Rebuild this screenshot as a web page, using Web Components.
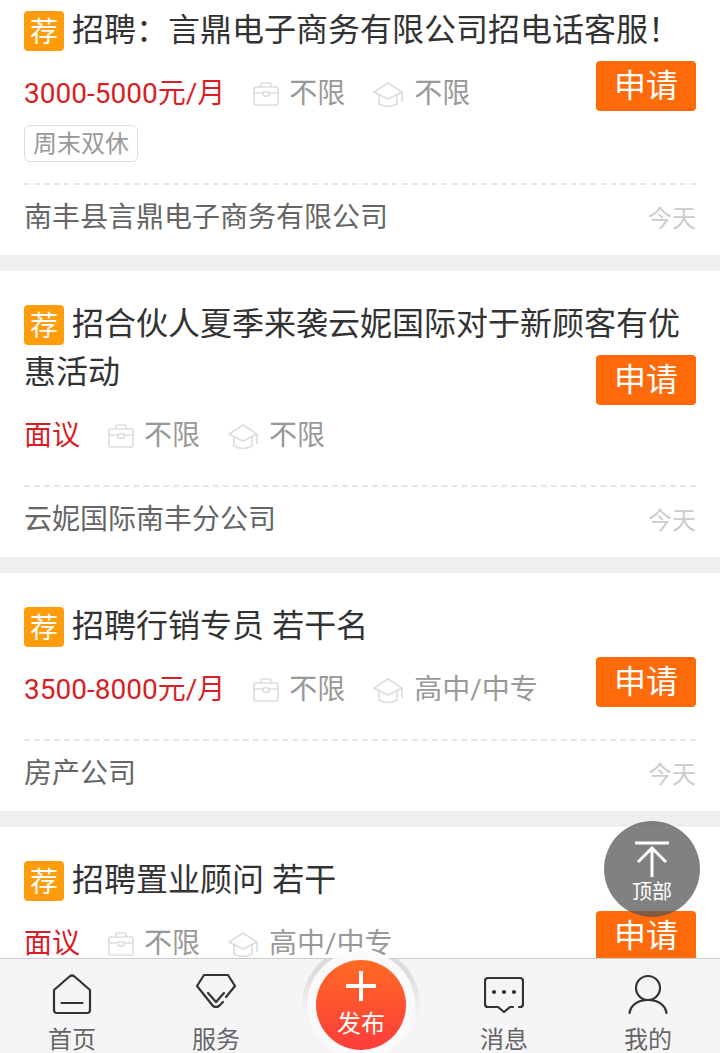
<!DOCTYPE html>
<html lang="zh">
<head>
<meta charset="utf-8">
<title>招聘</title>
<style>
    html, body { margin: 0; padding: 0; height: 100%; background: #efefef; overflow: hidden; }
    body { font-family: Roboto, "Noto Sans CJK SC", sans-serif; }
</style>
</head>
<body>

<app-page>
    <job-card rec title="招聘：言鼎电子商务有限公司招电话客服！" salary="3000-5000元/月" exp="不限" edu="不限" tag="周末双休" company="南丰县言鼎电子商务有限公司"></job-card>
    <job-card rec title="招合伙人夏季来袭云妮国际对于新顾客有优惠活动" salary="面议" exp="不限" edu="不限" company="云妮国际南丰分公司"></job-card>
    <job-card rec title="招聘行销专员 若干名" salary="3500-8000元/月" exp="不限" edu="高中/中专" company="房产公司"></job-card>
    <job-card rec title="招聘置业顾问 若干" salary="面议" exp="不限" edu="高中/中专"></job-card>
    <top-button slot="float"></top-button>
    <tab-bar slot="bar"></tab-bar>
</app-page>

<script>
class AppPage extends HTMLElement {
    constructor() {
        super()
        this.attachShadow({ mode: 'open' })
        this.shadowRoot.innerHTML = `
            <style>
                :host { display: block; position: relative; width: 720px; height: 1053px; overflow: hidden; }
                /* list is scrolled, first card is cut off at the top */
                .list { display: flex; flex-direction: column; gap: 16px; margin-top: -23px; }
                ::slotted(job-card) { flex: none; }
                ::slotted(top-button) { position: absolute; left: 604px; top: 821px; }
                ::slotted(tab-bar) { position: absolute; left: 0; right: 0; bottom: 0; }
            </style>
            <div class="list"><slot></slot></div>
            <slot name="float"></slot>
            <slot name="bar"></slot>
        `
    }
}

class JobCard extends HTMLElement {
    constructor() {
        super()
        this.attachShadow({ mode: 'open' })
    }

    connectedCallback() {
        this.render()
    }

    render() {
        const attr = name => this.getAttribute(name) ?? ''
        const tag = attr('tag')
        const company = attr('company')
        this.shadowRoot.innerHTML = `
            <style>
                :host { display: block; background: #fff; padding: 28px 24px 0; }
                .body { display: grid; }
                .body > * { grid-area: 1 / 1; }
                .title { margin-top: -2px; font-family: "Noto Sans CJK SC", Roboto, sans-serif; font-size: 32px; line-height: 48px;
                    word-spacing: 1px; color: #333; }
                .badge { display: inline-block; width: 40px; height: 40px; margin-right: 8px; border-radius: 4px;
                    background: #ff9c0c; color: #fff; font-size: 28px; line-height: 38px; text-align: center; vertical-align: -1px; }
                .apply { justify-self: end; align-self: start; margin-top: 56px; width: 100px; height: 50px;
                    border-radius: 4px; background: #ff6a0a; color: #fff; font-size: 32px; line-height: 50px; text-align: center; }
                .meta { display: flex; align-items: center; height: 48px; margin: 16px 0 1px; font-size: 28px; color: #999; }
                .salary { color: #d81e26; margin-right: 28px; }
                .meta svg { display: block; margin: 6px 10px 0 0; }
                .meta .cap { margin: 8px 11px 0 0; }
                .exp { margin-right: 28px; }
                .tag { display: block; width: max-content; margin-top: 10px; padding: 0 8px; height: 35px; border: 1px solid #ddd;
                    border-radius: 6px; font-size: 24px; line-height: 37px; color: #999; }
                .foot { display: flex; justify-content: space-between; align-items: center; height: 60px; padding-bottom: 10px; margin-top: 27px;
                    border-top: 2px dashed #e6e6e6; }
                .foot.tagged { margin-top: 21px; }
                .company { font-size: 28px; color: #666; }
                .date { margin-top: 2px; font-size: 24px; color: #ccc; }
            </style>
            <div class="body">
                <div>
                    <div class="title">${this.hasAttribute('rec') ? '<span class="badge">荐</span>' : ''}${attr('title')}</div>
                    <div class="meta">
                        <span class="salary">${attr('salary')}</span>
                        <svg width="26" height="24" viewBox="0 0 26 24" fill="none" stroke="#ddd" stroke-width="1.6">
                            <rect x="1" y="5" width="24" height="18" rx="2"/>
                            <path d="M8 5V2.500Q8 1 9.500 1h7Q18 1 18 2.500V5M1 11h9M16 11h9M10 10h6v3.500q-3 1.500-6 0z"/>
                        </svg>
                        <span class="exp">${attr('exp')}</span>
                        <svg class="cap" width="30" height="26" viewBox="0 0 30 26" fill="none" stroke="#ddd" stroke-width="1.6">
                            <path d="M15 1 29 10 15 17 1 10zM6 13v9q9 5 18 0v-9M29 10v10"/>
                        </svg>
                        <span>${attr('edu')}</span>
                    </div>
                    ${tag ? `<span class="tag">${tag}</span>` : ''}
                </div>
                <div class="apply">申请</div>
            </div>
            ${company ? `<div class="foot ${tag ? 'tagged' : ''}">
                <span class="company">${company}</span>
                <span class="date">今天</span>
            </div>` : ''}
        `
    }
}

class TopButton extends HTMLElement {
    constructor() {
        super()
        this.attachShadow({ mode: 'open' })
        this.shadowRoot.innerHTML = `
            <style>
                :host { display: flex; flex-direction: column; align-items: center; width: 96px; height: 96px; border-radius: 50%;
                    background: rgba(85, 85, 85, .74); color: #fff; font-size: 20px; line-height: 24px; padding-top: 20px; box-sizing: border-box; }
                svg { display: block; margin-bottom: 3px; }
            </style>
            <svg width="36" height="36" viewBox="0 0 36 36" fill="none" stroke="#fff" stroke-width="3">
                <path d="M1 2h34M18 36V7M4 21 18 7l14 14"/>
            </svg>
            <span>顶部</span>
        `
    }
}

class TabBar extends HTMLElement {
    constructor() {
        super()
        this.attachShadow({ mode: 'open' })
        this.shadowRoot.innerHTML = `
            <style>
                :host { display: grid; grid-template-columns: repeat(5, 144px); height: 94px;
                    background: #f5f5f7; border-top: 1px solid #ccc; color: #666; font-size: 24px; }
                .item { display: flex; flex-direction: column; align-items: center; padding-top: 14px; }
                .item svg { display: block; height: 44px; margin-bottom: 10px; }
                .item span { line-height: 26px; }
                .pub { position: relative; }
                /* grey crescents only show inside the bar */
                .clip { position: absolute; left: 0; right: 0; top: 0; height: 94px; overflow: hidden; }
                .halo { position: absolute; left: 14px; top: -13px; width: 118px; height: 118px; border-radius: 50%;
                    background: linear-gradient(180deg, #dcdcde 20%, #f5f5f7 60%); }
                .ring { position: absolute; left: 19px; top: -8px; width: 108px; height: 108px; border-radius: 50%; background: #fafafb; }
                .circle { position: absolute; left: 28px; top: 1px; width: 90px; height: 90px; border-radius: 50%;
                    background: linear-gradient(180deg, #ff6a24, #fb3c3c); color: #fff; display: flex; flex-direction: column; align-items: center; }
                .circle svg { display: block; margin-top: 11px; }
                .circle span { line-height: 28px; margin-top: 9px; }
            </style>
            <div class="item">
                <svg width="40" height="44" viewBox="0 0 40 44" fill="none" stroke="#333" stroke-width="2.200" stroke-linejoin="round" stroke-linecap="round">
                    <path d="M2 17 17.500 3.500q2.500-2 5 0L38 17V37q0 3-3 3H5q-3 0-3-3zM9.500 30h21"/>
                </svg>
                <span>首页</span>
            </div>
            <div class="item">
                <svg width="40" height="44" viewBox="0 0 40 44" fill="none" stroke="#333" stroke-width="2.200" stroke-linejoin="round" stroke-linecap="round">
                    <path d="M30 24 39 13 32 2H8L1 13 17 33q3 2 6 0l4-4M12 20l8 9 8-9"/>
                </svg>
                <span>服务</span>
            </div>
            <div class="pub">
                <div class="clip"><div class="halo"></div></div>
                <div class="ring"></div>
                <div class="circle">
                    <svg width="30" height="30" viewBox="0 0 30 30" stroke="#fff" stroke-width="4"><path d="M0 15h30M15 0v30"/></svg>
                    <span>发布</span>
                </div>
            </div>
            <div class="item">
                <svg width="40" height="44" viewBox="0 0 40 44" fill="none" stroke="#333" stroke-width="2.200" stroke-linejoin="round" stroke-linecap="round">
                    <path d="M14 34H4q-3 0-3-3V8q0-3 3-3h32q3 0 3 3v23q0 3-3 3h-1M14 34l6 5 6-5h3"/>
                    <circle cx="10" cy="19" r="1" fill="#333"/><circle cx="20" cy="19" r="1" fill="#333"/><circle cx="30" cy="19" r="1" fill="#333"/>
                </svg>
                <span>消息</span>
            </div>
            <div class="item">
                <svg width="40" height="44" viewBox="0 0 40 44" fill="none" stroke="#333" stroke-width="2.200" stroke-linecap="round">
                    <circle cx="20" cy="15" r="12"/>
                    <path d="M1.500 40C3 31 11 27 20 27S37 31 38.500 40"/>
                </svg>
                <span>我的</span>
            </div>
        `
    }
}

customElements.define('app-page', AppPage)
customElements.define('job-card', JobCard)
customElements.define('top-button', TopButton)
customElements.define('tab-bar', TabBar)
</script>
</body>
</html>
